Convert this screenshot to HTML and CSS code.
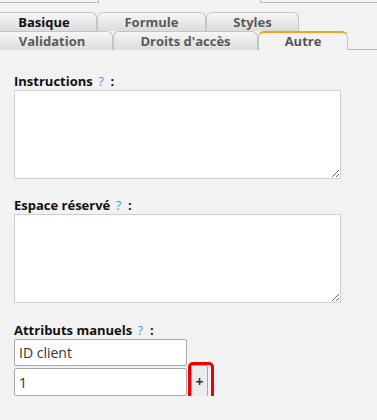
FILE: index.html
```html
<!DOCTYPE html>
<html lang="fr">
<head>
<meta charset="utf-8">
<link rel="stylesheet" href="styles.css">
</head>
<body>
<div class="top-strip">
  <div class="top-left"></div>
  <div class="top-gap"></div>
  <div class="top-right"></div>
</div>
<div class="tabs">
  <div class="tab-row row1">
    <div class="tab first" style="width:97px"><span class="dark">Basique</span></div>
    <div class="tab" style="width:109px">Formule</div>
    <div class="tab" style="width:93px">Styles</div>
  </div>
  <div class="tab-row row2">
    <div class="tab first" style="width:113px">Validation</div>
    <div class="tab" style="width:145px">Droits d'accès</div>
    <div class="tab active" style="width:90px">Autre</div>
    <div class="tab-fill"></div>
  </div>
</div>
<div class="content">
  <label class="field-label">Instructions <span class="help">?</span> &nbsp;:</label>
  <textarea class="area"></textarea>
  <label class="field-label second">Espace réservé <span class="help">?</span> &nbsp;:</label>
  <textarea class="area"></textarea>
  <label class="field-label third">Attributs manuels <span class="help">?</span> &nbsp;:</label>
  <div class="attr-row"><input class="txt" type="text" value="ID client"></div>
  <div class="attr-row second-row">
    <input class="txt" type="text" value="1">
    <span class="highlight"><button class="plus" type="button">+</button></span>
  </div>
</div>
</body>
</html>
```
FILE: styles.css
```css
html, body {
  margin: 0;
  padding: 0;
  background: #f2f2f2;
  font-family: "Open Sans", "DejaVu Sans", sans-serif;
  color: #222;
}
.top-strip {
  display: flex;
  height: 3px;
}
.top-left {
  width: 98px;
  height: 2px;
  border-right: 1px solid #bcbcbc;
  border-bottom: 1px solid #bcbcbc;
}
.top-gap { width: 161px; }
.top-right {
  flex: 1;
  height: 2px;
  border-left: 1px solid #bcbcbc;
  border-bottom: 1px solid #bcbcbc;
}
.tabs {
  padding-top: 9px;
}
.tab-row {
  display: flex;
  height: 19px;
}
.tab {
  box-sizing: border-box;
  height: 19px;
  border: 1px solid #c4c4c4;
  border-bottom: none;
  border-radius: 6px 6px 0 0;
  background: linear-gradient(#f6f6f6, #dcdcdc);
  font-weight: bold;
  font-size: 13px;
  line-height: 18px;
  color: #5a5a5a;
  text-align: center;
}
.tab.first {
  border-left: none;
  border-top-left-radius: 0;
  padding-right: 8px;
}
.tab .dark { color: #111; }
.tab.active {
  background: #f2f2f2;
  border-top: 2px solid #f4a21c;
  line-height: 17px;
  color: #555;
}
.tab-fill {
  flex: 1;
  border-bottom: 1px solid #bcbcbc;
}
.content {
  padding: 22px 14px 0 14px;
  display: flex;
  flex-direction: column;
  align-items: flex-start;
}
.field-label {
  display: block;
  font-weight: bold;
  font-size: 13px;
  line-height: 18px;
  color: #111;
}
.help {
  color: #3a9ad9;
  font-weight: normal;
  margin-left: 2px;
}
.field-label.second { margin-top: 17px; }
.field-label.third { margin-top: 18px; }
.area {
  box-sizing: border-box;
  width: 327px;
  height: 89px;
  margin: 0;
  background: #fff;
  border: 1px solid #cfcfcf;
  border-radius: 0;
  padding: 2px;
  font-family: "Open Sans", sans-serif;
}
.attr-row {
  display: flex;
  align-items: flex-start;
  height: 27px;
}
.attr-row.second-row {
  margin-top: 2px;
  height: 28px;
}
.txt {
  box-sizing: border-box;
  width: 173px;
  height: 100%;
  margin: 0;
  border: 1px solid #a8a8a8;
  border-radius: 2px;
  background: #fff;
  padding: 0 4px;
  font-family: "Open Sans", sans-serif;
  font-size: 14px;
  color: #333;
}
.highlight {
  display: inline-flex;
  box-sizing: border-box;
  flex: none;
  width: 26px;
  height: 39px;
  margin: -6px 0 0 1px;
  border: 3px solid #ee0000;
  border-radius: 5px;
  padding: 0 3px 0 0;
}
.plus {
  box-sizing: border-box;
  width: 17px;
  height: 33px;
  margin: 0;
  padding: 0;
  border: 1px solid #a8a8a8;
  border-radius: 2px;
  background: #ececec;
  font-family: "Open Sans", sans-serif;
  font-size: 14px;
  font-weight: bold;
  color: #333;
}
```
